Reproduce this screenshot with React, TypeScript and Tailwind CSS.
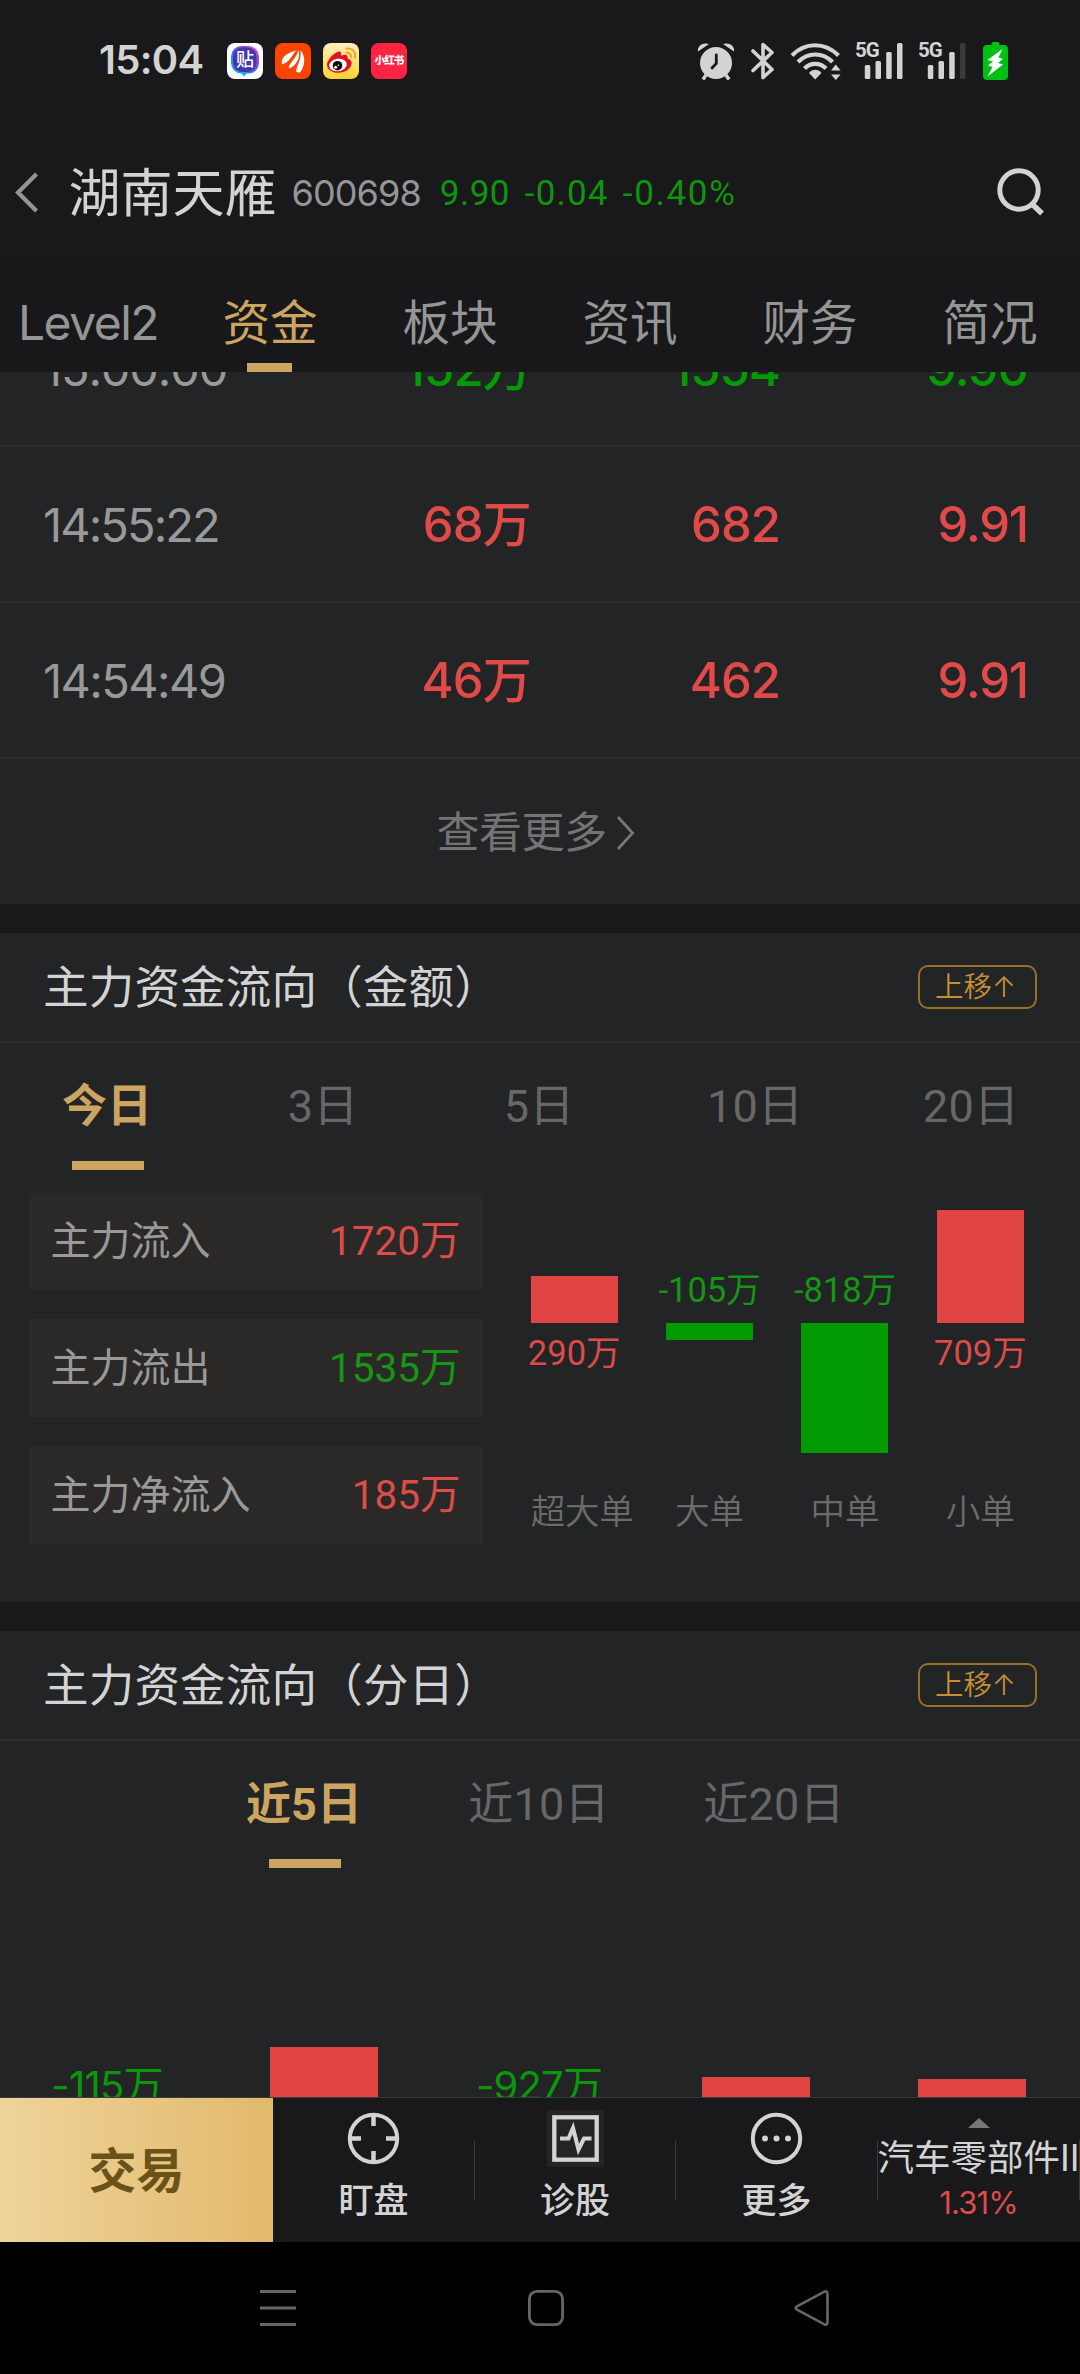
import React from "react";

const UI = "font-['Inter','Noto_Sans_CJK_SC',sans-serif]";
const ROBOTO = "font-['Roboto','Noto_Sans_CJK_SC',sans-serif]";

function AppIcons() {
  return (
    <div className="flex items-center gap-[12px]">
      <div className="relative flex h-[36px] w-[36px] items-center justify-center overflow-hidden rounded-[8px] bg-white">
        <svg width="36" height="36" viewBox="0 0 36 36" className="absolute inset-0">
          <defs>
            <linearGradient id="tieba" x1="0" y1="1" x2="1" y2="0.1">
              <stop offset="0" stopColor="#18b8ff" />
              <stop offset="0.45" stopColor="#3c6cf5" />
              <stop offset="0.75" stopColor="#8d4be0" />
              <stop offset="1" stopColor="#ff4f8b" />
            </linearGradient>
          </defs>
          <rect x="4" y="3" width="28" height="27.500" rx="10.500" fill="url(#tieba)" />
          <path d="M13.500 29h7l-3.500 4.500z" fill="#18a8f5" />
          <rect x="6" y="4.500" width="23.500" height="24.500" rx="9" fill="#4536ae" />
        </svg>
        <span className="relative mt-[-2px] text-[18px] leading-[20px] font-medium text-white">贴</span>
      </div>
      <svg width="36" height="36" viewBox="0 0 36 36">
        <rect width="36" height="36" rx="8" fill="#fe4400" />
        <path d="M7 21.500C6 15 9.500 10.500 21.800 7.200 16.500 11 17 17.500 7 21.500z" fill="#fff" />
        <path d="M13.600 25.600C13.800 19.500 20.500 17 23.400 7.200 25.800 14 21.500 23 13.600 25.600z" fill="#fff" />
        <path d="M21.200 29C20.800 23.500 26.500 18 25.600 7.200 30.600 13 30.600 22.500 24.800 29.800z" fill="#fff" />
      </svg>
      <svg width="36" height="36" viewBox="0 0 36 36">
        <defs>
          <linearGradient id="weibo" x1="0" y1="0" x2="0" y2="1">
            <stop offset="0" stopColor="#fff0bd" />
            <stop offset="1" stopColor="#ffd232" />
          </linearGradient>
        </defs>
        <rect width="36" height="36" rx="8" fill="url(#weibo)" />
        <path d="M4 21.500c0-4.300 6.400-11.500 11.200-12.800 2.700-.7 3.700 1.200 2.700 4 4.200-1.900 7.700-1.200 6.500 2.700 2.700.7 4.300 2.200 4.300 4.600 0 4.900-6 9.800-13.200 9.800C8.800 29.800 4 26.500 4 21.500z" fill="#e0131f" />
        <ellipse cx="15" cy="22" rx="8.800" ry="6.300" fill="#fff" transform="rotate(-8 15 22)" />
        <circle cx="14.500" cy="22.700" r="4.800" fill="#0c0c0c" />
        <circle cx="12.700" cy="24.200" r="1.500" fill="#fff" />
        <circle cx="15.400" cy="22.300" r=".8" fill="#fff" />
        <path d="M23.500 9.800c3-.5 5.300 1.800 4.700 4.700" stroke="#f9a11b" strokeWidth="1.900" fill="none" strokeLinecap="round" />
        <path d="M23.500 5.500c5.700-.9 9.700 3.700 8.300 9.300" stroke="#f9a11b" strokeWidth="1.900" fill="none" strokeLinecap="round" />
      </svg>
      <div className="flex h-[36px] w-[36px] items-center justify-center rounded-[8px] bg-[#ff2442]">
        <span className="text-[10.500px] leading-[12px] font-black tracking-[-0.800px] whitespace-nowrap text-white">小红书</span>
      </div>
    </div>
  );
}

function Signal({ dim }: { dim?: boolean }) {
  return (
    <div className="relative h-[38px] w-[48px]">
      <span className="absolute top-0 left-0 font-['Roboto',sans-serif] text-[20.500px] leading-[16px] font-bold tracking-[-1px]">5G</span>
      <svg width="48" height="38" viewBox="0 0 48 38" className="absolute inset-0">
        <rect x="9.800" y="23" width="5.500" height="14" rx="1.500" fill="#d3d3d3" />
        <rect x="20.500" y="19" width="5.500" height="18" rx="1.500" fill="#d3d3d3" />
        <rect x="31.200" y="10" width="5.500" height="27" rx="1.500" fill="#d3d3d3" />
        <rect x="42" y="1" width="5.500" height="36" rx="1.500" fill={dim ? "#3a3a3c" : "#d3d3d3"} />
      </svg>
    </div>
  );
}

function StatusBar() {
  return (
    <div className="flex h-[121px] shrink-0 items-center pr-[72.500px] pl-[99px] text-[#d3d3d3]">
      <span className="mt-[-2px] w-[128px] text-[40px] leading-[40px] font-semibold tracking-[-0.700px]">15:04</span>
      <AppIcons />
      <div className="flex-1" />
      <svg width="38" height="38" viewBox="0 0 38 38" className="mr-[16px]">
        <circle cx="19" cy="21" r="16" fill="#d3d3d3" />
        <path d="M1 9.500C0 4 6 0 12 2z" fill="#d3d3d3" />
        <path d="M37 9.500C38 4 32 0 26 2z" fill="#d3d3d3" />
        <path d="M9 33l-3 4.500M29 33l3 4.500" stroke="#d3d3d3" strokeWidth="3.500" />
        <path d="M19.300 13v8.500L15 26" stroke="#19191b" strokeWidth="2.800" fill="none" strokeLinecap="round" />
      </svg>
      <svg width="24" height="38" viewBox="0 0 24 38" className="mr-[15px]">
        <path d="M2 9l19 18.500-9 8V2.500l9 8L2 28.500" fill="none" stroke="#d3d3d3" strokeWidth="3.600" strokeLinejoin="round" strokeLinecap="round" />
      </svg>
      <svg width="51" height="38" viewBox="0 0 51 38" className="mr-[14px]">
        <g fill="none" stroke="#d3d3d3" strokeWidth="4.200">
          <path d="M2 13.500C15-.2 35-.2 48.500 13.500" />
          <path d="M8 20c9.700-10 25-10 34.500 0" />
          <path d="M14.500 26.500c6-6.200 15.500-6.200 21.500 0" />
        </g>
        <path d="M19 31c3.500-4.300 9-4.300 12.500 0l-6.300 6.500z" fill="#d3d3d3" />
        <path d="M41 28.500l4.800-6 4.800 6zM41 32.500l4.800 5.500 4.800-5.500z" fill="#d3d3d3" />
      </svg>
      <Signal />
      <div className="w-[15px]" />
      <Signal dim />
      <svg width="25" height="38" viewBox="0 0 25 38" className="ml-[16.500px]">
        <path d="M8.500 2q0-2 2-2h4q2 0 2 2v1H21q4 0 4 4v27q0 4-4 4H4q-4 0-4-4V7q0-4 4-4h4.500z" fill="#00c013" />
        <path d="M19.500 7L4.500 18l5.500 1.500L5 23.500l4.500 1.500-5 9.500L20 22.500l-5-1.500 5-4-4.500-1.500z" fill="#fff" />
      </svg>
    </div>
  );
}

function Header() {
  return (
    <div className="flex h-[141px] shrink-0 items-center border-b border-[#161617] pr-[35px] pl-[15px]">
      <svg width="24" height="41" viewBox="0 0 24 41" className="mt-[3px] mr-[29.500px]">
        <path d="M21.500 2L3 20.500 21.500 39" fill="none" stroke="#959595" strokeWidth="4.200" />
      </svg>
      <span className="mt-[6px] text-[52px] leading-[60px] text-[#d3d3d3]">湖南天雁</span>
      <span className="mt-[4px] ml-[15px] text-[36px] leading-[40px] tracking-[-0.900px] text-[#959595]">600698</span>
      <div className={`${ROBOTO} mt-[5px] flex text-[35px] leading-[40px] text-[#0f940f]`}>
        <span className="ml-[19px] w-[85px] tracking-[0.500px]">9.90</span>
        <span className="w-[98px] tracking-[1.200px]">-0.04</span>
        <span className="tracking-[1.700px]">-0.40%</span>
      </div>
      <div className="flex-1" />
      <svg width="48" height="50" viewBox="0 0 48 50" className="mt-[2px]">
        <circle cx="22" cy="23" r="19.200" fill="none" stroke="#d3d3d3" strokeWidth="5" />
        <path d="M35 37l10 9.500" stroke="#d3d3d3" strokeWidth="5.500" />
      </svg>
    </div>
  );
}

const TOP_TABS = ["Level2", "资金", "板块", "资讯", "财务", "简况"];

function TopTabs() {
  return (
    <div className="grid h-[110px] shrink-0 grid-cols-6 bg-[#18181a]">
      {TOP_TABS.map((t, i) => (
        <div key={t} className="flex flex-col items-center">
          <span
            className={
              i === 1
                ? "mt-[21px] text-[47.500px] leading-[80px] text-[#cca661]"
                : i === 0
                  ? "mt-[21px] mr-[4px] text-[48px] leading-[80px] tracking-[-1.500px] text-[#959595]"
                  : "mt-[21px] text-[47.500px] leading-[80px] text-[#959595]"
            }
          >
            {t}
          </span>
          {i === 1 && <div className="mr-px h-[9px] w-[45px] bg-[#cca661]" />}
        </div>
      ))}
    </div>
  );
}

const DEALS = [
  { time: "15:00:00", amount: "152万", lots: "1554", price: "9.90", up: false, track: "tracking-[-1.150px]" },
  { time: "14:55:22", amount: "68万", lots: "682", price: "9.91", up: true, track: "tracking-[-1.900px]" },
  { time: "14:54:49", amount: "46万", lots: "462", price: "9.91", up: true, track: "tracking-[-1.600px]" },
];

function Deals() {
  return (
    <div className="flex h-[532px] shrink-0 flex-col justify-end overflow-hidden bg-[#222426]">
      {DEALS.map((d) => (
        <div
          key={d.time}
          className="grid h-[156px] shrink-0 grid-cols-[1fr_249px_248px] items-center border-b-2 border-[#2d2f31] pt-[2px] pr-[52px] pl-[43px]"
        >
          <div className="flex items-center justify-between">
            <span className={`text-[47px] leading-[60px] text-[#999999] ${d.track}`}>{d.time}</span>
            <span className={`text-[49px] leading-[60px] font-medium tracking-[-0.800px] ${d.up ? "text-[#e04a48]" : "text-[#059905]"}`}>
              {d.amount}
            </span>
          </div>
          <span
            className={`text-right text-[49px] leading-[60px] font-medium tracking-[-1px] ${d.up ? "text-[#e04a48]" : "text-[#059905]"}`}
          >
            {d.lots}
          </span>
          <span
            className={`text-right text-[49px] leading-[60px] font-medium tracking-[-1.200px] ${d.up ? "text-[#e04a48]" : "text-[#059905]"}`}
          >
            {d.price}
          </span>
        </div>
      ))}
      <div className="flex h-[145px] shrink-0 items-center justify-center pr-[7px] text-[#747474]">
        <span className="text-[43px] leading-[60px] tracking-[-0.500px]">查看更多</span>
        <svg width="22" height="36" viewBox="0 0 22 36" className="mt-[2px] ml-[8px]">
          <path d="M3 2l14.500 16L3 34" fill="none" stroke="#777777" strokeWidth="2.800" />
        </svg>
      </div>
    </div>
  );
}

function SectionHeader({ title }: { title: string }) {
  return (
    <div className="flex h-[110px] shrink-0 items-center justify-between border-b-2 border-[#2d2f31] pr-[43px] pl-[43px]">
      <span className="mt-[2px] text-[45.500px] leading-[60px] tracking-[0.200px] text-[#d3d3d3]">{title}</span>
      <div className="mt-[-1px] flex h-[44px] w-[119px] items-center justify-center rounded-[10px] border-2 border-[#98702b] pr-[4px] pt-px">
        <span className="text-[28.500px] leading-[40px] font-[350] text-[#c78f35]">上移↑</span>
      </div>
    </div>
  );
}

function RangeTabs({ items, cls }: { items: string[]; cls: string }) {
  return (
    <div className={`${ROBOTO} flex h-[128px] shrink-0 justify-center border-b border-[#1f2123]`}>
      {items.map((t, i) => (
        <div key={t} className={`flex flex-col items-center ${cls}`}>
          <span
            className={
              i === 0
                ? "mt-[9px] mr-[2px] h-[109px] text-[45px] leading-[110px] font-bold text-[#cca661]"
                : "mt-[9px] mr-[2px] h-[109px] text-[45px] leading-[110px] tracking-[0.200px] text-[#676767]"
            }
          >
            {t}
          </span>
          {i === 0 && <div className="h-[9px] w-[72px] bg-[#cca661]" />}
        </div>
      ))}
    </div>
  );
}

const TOTALS = [
  { label: "主力流入", value: "1720万", up: true },
  { label: "主力流出", value: "1535万", up: false },
  { label: "主力净流入", value: "185万", up: true },
];

const ORDERS = [
  { label: "超大单", value: 290, px: 47 },
  { label: "大单", value: -105, px: 17 },
  { label: "中单", value: -818, px: 130 },
  { label: "小单", value: 709, px: 113 },
];

function FlowSummary() {
  return (
    <div className={`${ROBOTO} flex h-[431px] shrink-0 pt-[21.600px] pl-[28.500px]`}>
      <div className="flex w-[454px] flex-col gap-[29.200px]">
        {TOTALS.map((r) => (
          <div key={r.label} className="flex h-[97.600px] items-center justify-between bg-[#2b2927] pr-[22px] pl-[22px]">
            <span className={`${UI} text-[40px] leading-[50px] text-[#999999]`}>{r.label}</span>
            <span className={`text-[40.500px] leading-[50px] ${r.up ? "text-[#db4c4a]" : "text-[#159615]"}`}>{r.value}</span>
          </div>
        ))}
      </div>
      <div className="ml-[24px] flex">
        {ORDERS.map((o) => (
          <div key={o.label} className="flex w-[135.400px] flex-col items-center">
            <div className="flex h-[130px] w-full flex-col items-center justify-end">
              {o.value > 0 ? (
                <div className="w-[87px] bg-[#e04543]" style={{ height: o.px }} />
              ) : (
                <span className="mb-[14px] text-[34.500px] leading-[38px] whitespace-nowrap text-[#159615]">{o.value}万</span>
              )}
            </div>
            <div className="flex h-[170px] w-full flex-col items-center">
              {o.value < 0 ? (
                <div className="w-[87px] bg-[#029a02]" style={{ height: o.px }} />
              ) : (
                <span className="mt-[11px] text-[34.500px] leading-[38px] whitespace-nowrap text-[#db4c4a]">{o.value}万</span>
              )}
            </div>
            <span
              className={
                o.label.length > 2
                  ? "ml-[16px] text-[34.500px] leading-[38px] font-[350] tracking-[-0.200px] text-[#6b6b6b]"
                  : "text-[34.500px] leading-[38px] font-[350] text-[#6b6b6b]"
              }
            >
              {o.label}
            </span>
          </div>
        ))}
      </div>
    </div>
  );
}

const DAYS = [
  { id: 1, text: "-115万" },
  { id: 2, px: 50 },
  { id: 3, text: "-927万" },
  { id: 4, px: 20 },
  { id: 5, px: 18 },
];

function DailyChart() {
  return (
    <div className="grid h-[228px] shrink-0 grid-cols-5 items-end overflow-hidden">
      {DAYS.map((d) => (
        <div key={d.id} className="flex justify-center">
          {d.text ? (
            <span className="mr-[2px] mb-[-19px] text-[40px] leading-[60px] tracking-[-0.800px] text-[#0a980a]">{d.text}</span>
          ) : (
            <div className="w-[108px] bg-[#e04543]" style={{ height: d.px }} />
          )}
        </div>
      ))}
    </div>
  );
}

function BottomBar() {
  const label = "mt-[11px] text-[35px] leading-[44px] font-medium text-[#d3d3d3]";
  const cell = "relative flex flex-col items-center pt-[12px] pr-[1px]";
  const divider = <div className="absolute top-[42px] right-0 h-[60px] w-px bg-[#3a3a3c]" />;
  return (
    <div className="grid h-[145px] shrink-0 grid-cols-[273px_202px_201px_202px_202px] border-t border-[#3b3b3d] bg-[#19191b]">
      <div className="flex items-center justify-center bg-gradient-to-r from-[#eed39b] to-[#e2b96b] pt-[2px]">
        <span className="text-[48px] leading-[60px] font-bold text-[#6b5218]">交易</span>
      </div>
      <div className={cell}>
        <svg width="57" height="57" viewBox="0 0 57 57">
          <circle cx="28.500" cy="28.500" r="23.700" fill="none" stroke="#d3d3d3" strokeWidth="4" />
          <path d="M28.500 4v12M28.500 41v12M4 28.500h12M41 28.500h12" stroke="#d3d3d3" strokeWidth="4.500" />
        </svg>
        <span className={label}>盯盘</span>
        {divider}
      </div>
      <div className={cell}>
        <svg width="57" height="57" viewBox="0 0 57 57" className="bg-[#222426]">
          <rect x="7.300" y="7.300" width="42.400" height="42.400" fill="none" stroke="#d3d3d3" strokeWidth="4.300" />
          <path d="M13 28.500h8.500L26 18l5.500 21.500L37 28.500h7.500" fill="none" stroke="#d3d3d3" strokeWidth="4" />
        </svg>
        <span className={label}>诊股</span>
        {divider}
      </div>
      <div className={cell}>
        <svg width="57" height="57" viewBox="0 0 57 57">
          <circle cx="28.500" cy="28.500" r="23.700" fill="none" stroke="#d3d3d3" strokeWidth="4" />
          <circle cx="17" cy="28.500" r="3" fill="#d3d3d3" />
          <circle cx="28.500" cy="28.500" r="3" fill="#d3d3d3" />
          <circle cx="40" cy="28.500" r="3" fill="#d3d3d3" />
        </svg>
        <span className={label}>更多</span>
        {divider}
      </div>
      <div className="relative flex flex-col items-center pr-[1px]">
        <svg width="22" height="10" viewBox="0 0 22 10" className="mt-[20px]">
          <path d="M0 10L11 0l11 10z" fill="#777777" />
        </svg>
        <span className="mt-[8px] text-[36.500px] leading-[44px] whitespace-nowrap text-[#d3d3d3]">汽车零部件II</span>
        <span className="mt-[7px] text-[31px] leading-[32px] tracking-[-0.900px] text-[#db4c4a]">1.31%</span>
        {divider}
      </div>
    </div>
  );
}

function NavBar() {
  return (
    <div className="flex flex-1 items-start bg-black pt-[47px]">
      <svg width="38" height="38" viewBox="0 0 38 38" className="ml-[259px]">
        <path d="M1 2.500h36M1 19h36M1 35.500h36" stroke="#666666" strokeWidth="3" />
      </svg>
      <svg width="38" height="38" viewBox="0 0 38 38" className="ml-[230px]">
        <rect x="2.400" y="2.400" width="33.200" height="33.200" rx="7.500" fill="none" stroke="#666666" strokeWidth="2.800" />
      </svg>
      <svg width="38" height="38" viewBox="0 0 38 38" className="ml-[228px]">
        <path d="M4 17.300L31 2.800q3.500-1.500 3.500 2v28.400q0 3.500-3.500 2L4 20.700q-3-1.700 0-3.400z" fill="none" stroke="#666666" strokeWidth="2.600" strokeLinejoin="round" />
      </svg>
    </div>
  );
}

export default function App() {
  return (
    <div lang="zh-CN" className={`${UI} flex h-[2374px] w-[1080px] flex-col overflow-hidden bg-[#19191b]`}>
      <StatusBar />
      <Header />
      <TopTabs />
      <Deals />
      <div className="h-[29px] shrink-0 bg-[#191919]" />
      <div className="flex shrink-0 flex-col bg-[#222426]">
        <SectionHeader title="主力资金流向（金额）" />
        <RangeTabs items={["今日", "3日", "5日", "10日", "20日"]} cls="w-[216px]" />
        <FlowSummary />
      </div>
      <div className="h-[29px] shrink-0 bg-[#191919]" />
      <div className="flex shrink-0 flex-col bg-[#222426]">
        <SectionHeader title="主力资金流向（分日）" />
        <RangeTabs items={["近5日", "近10日", "近20日"]} cls="w-[235px]" />
        <DailyChart />
      </div>
      <BottomBar />
      <NavBar />
    </div>
  );
}
